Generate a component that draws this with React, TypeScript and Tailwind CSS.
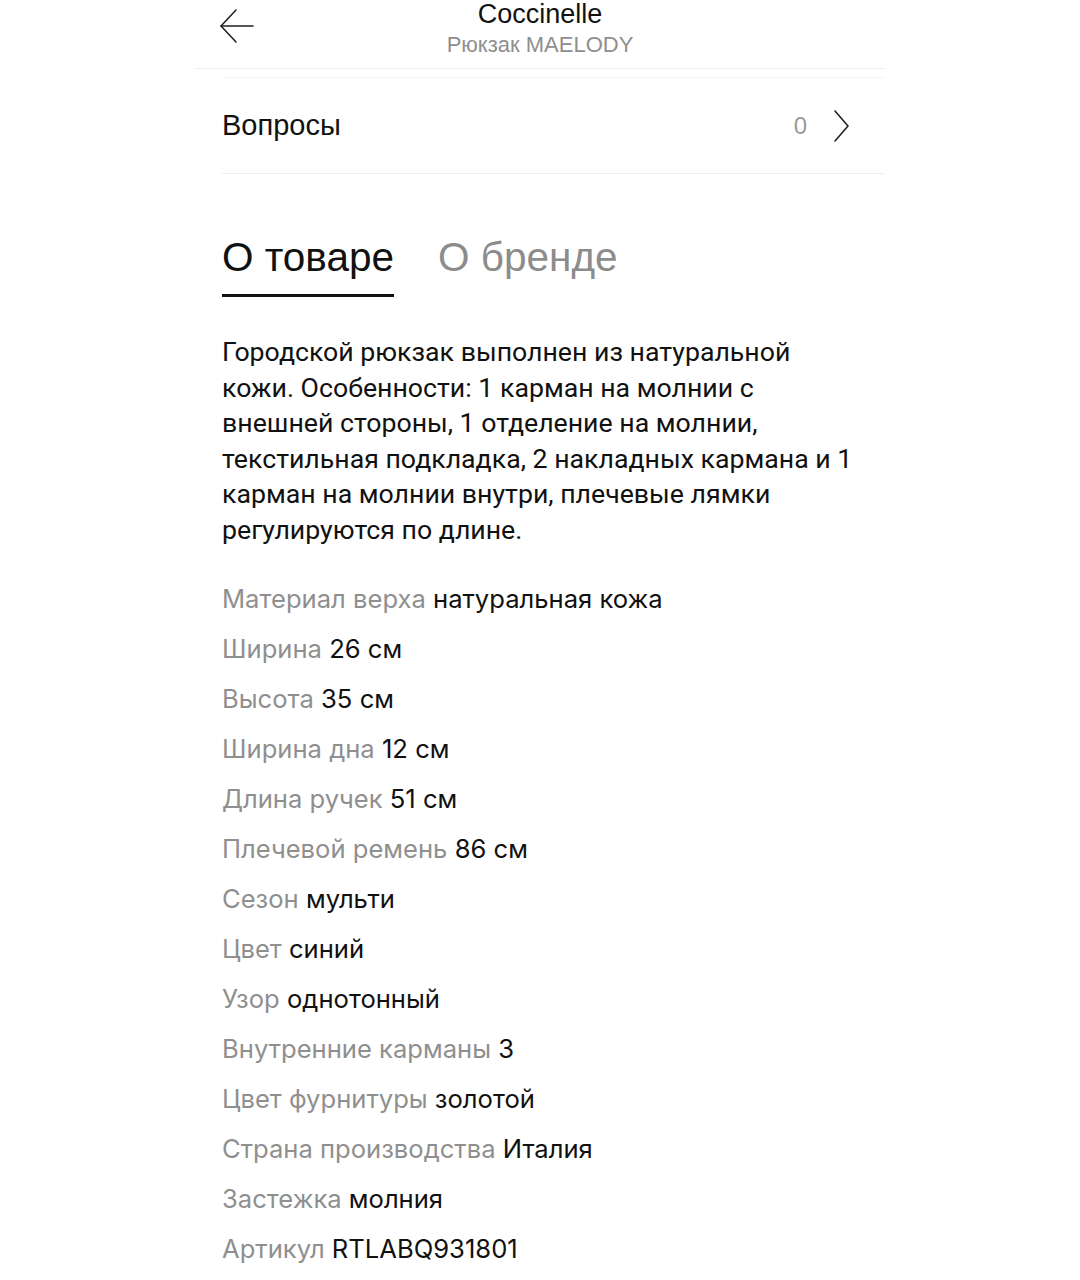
import React from 'react';

const specs: [string, string][] = [
  ['Материал верха', 'натуральная кожа'],
  ['Ширина', '26 см'],
  ['Высота', '35 см'],
  ['Ширина дна', '12 см'],
  ['Длина ручек', '51 см'],
  ['Плечевой ремень', '86 см'],
  ['Сезон', 'мульти'],
  ['Цвет', 'синий'],
  ['Узор', 'однотонный'],
  ['Внутренние карманы', '3'],
  ['Цвет фурнитуры', 'золотой'],
  ['Страна производства', 'Италия'],
  ['Застежка', 'молния'],
  ['Артикул', 'RTLABQ931801'],
];

// line breaks as in the app's text block
const descriptionLines = [
  'Городской рюкзак выполнен из натуральной',
  'кожи. Особенности: 1 карман на молнии с',
  'внешней стороны, 1 отделение на молнии,',
  'текстильная подкладка, 2 накладных кармана и 1',
  'карман на молнии внутри, плечевые лямки',
  'регулируются по длине.',
];

const App: React.FC = () => {
  return (
    <div className="min-h-[1280px] bg-white font-['Liberation_Sans',Arial,sans-serif] text-[#111]">
      <div className="mx-auto w-[690px]">
        {/* Header */}
        <div className="relative flex h-[69px] flex-col items-center border-b border-[#f0f0f0]">
          <button className="absolute left-[24px] top-[8px] text-[#222]" aria-label="Back">
            <svg width="36" height="36" viewBox="0 0 36 36" fill="none" stroke="currentColor" strokeWidth="1.6" strokeLinecap="round" strokeLinejoin="round">
              <path d="M34 18H2" />
              <path d="M17 2L2 18l15 16" />
            </svg>
          </button>
          <div className="text-[27px] leading-[29px] text-[#111]">Coccinelle</div>
          <div className="mt-[2px] text-[22px] leading-[28px] text-[#8e8e8e]">Рюкзак MAELODY</div>
        </div>

        <div className="ml-[27px]">
          <div className="mt-[8px] border-t border-[#f4f4f4]"></div>

          {/* Questions row */}
          <div className="flex h-[96px] items-center justify-between border-b border-[#efefef] pr-[36px]">
            <span className="text-[29px] text-[#111]">Вопросы</span>
            <div className="flex items-center gap-[26px]">
              <span className="text-[24px] text-[#9a9a9a]">0</span>
              <svg width="16" height="34" viewBox="0 0 16 34" fill="none" stroke="#222" strokeWidth="1.6" strokeLinecap="round" strokeLinejoin="round">
                <path d="M2 2l13 15L2 32" />
              </svg>
            </div>
          </div>

          {/* Tabs */}
          <div className="mt-[60px] flex gap-[44px]">
            <div className="flex flex-col">
              <span className="text-[40.5px] leading-[46px] text-[#111]">О товаре</span>
              <div className="mt-[14px] h-[3px] bg-[#111]"></div>
            </div>
            <span className="text-[40.5px] leading-[46px] text-[#8c8c8c]">О бренде</span>
          </div>

          {/* Description */}
          <p className="mt-[38px] font-['Roboto',sans-serif] text-[26.7px] leading-[35.5px] text-[#111]">
            {descriptionLines.map((line, i) => (
              <React.Fragment key={i}>
                {line}
                {i < descriptionLines.length - 1 && <br />}
              </React.Fragment>
            ))}
          </p>

          {/* Specs */}
          <div className="mt-[26px] flex flex-col font-['Inter',sans-serif] text-[25.6px]">
            {specs.map(([label, value]) => (
              <div key={label} className="h-[50px] leading-[50px]">
                <span className="text-[#8f8f8f]">{label}</span>{' '}
                <span className="text-[#111]">{value}</span>
              </div>
            ))}
          </div>
        </div>
      </div>
    </div>
  );
};

export default App;
